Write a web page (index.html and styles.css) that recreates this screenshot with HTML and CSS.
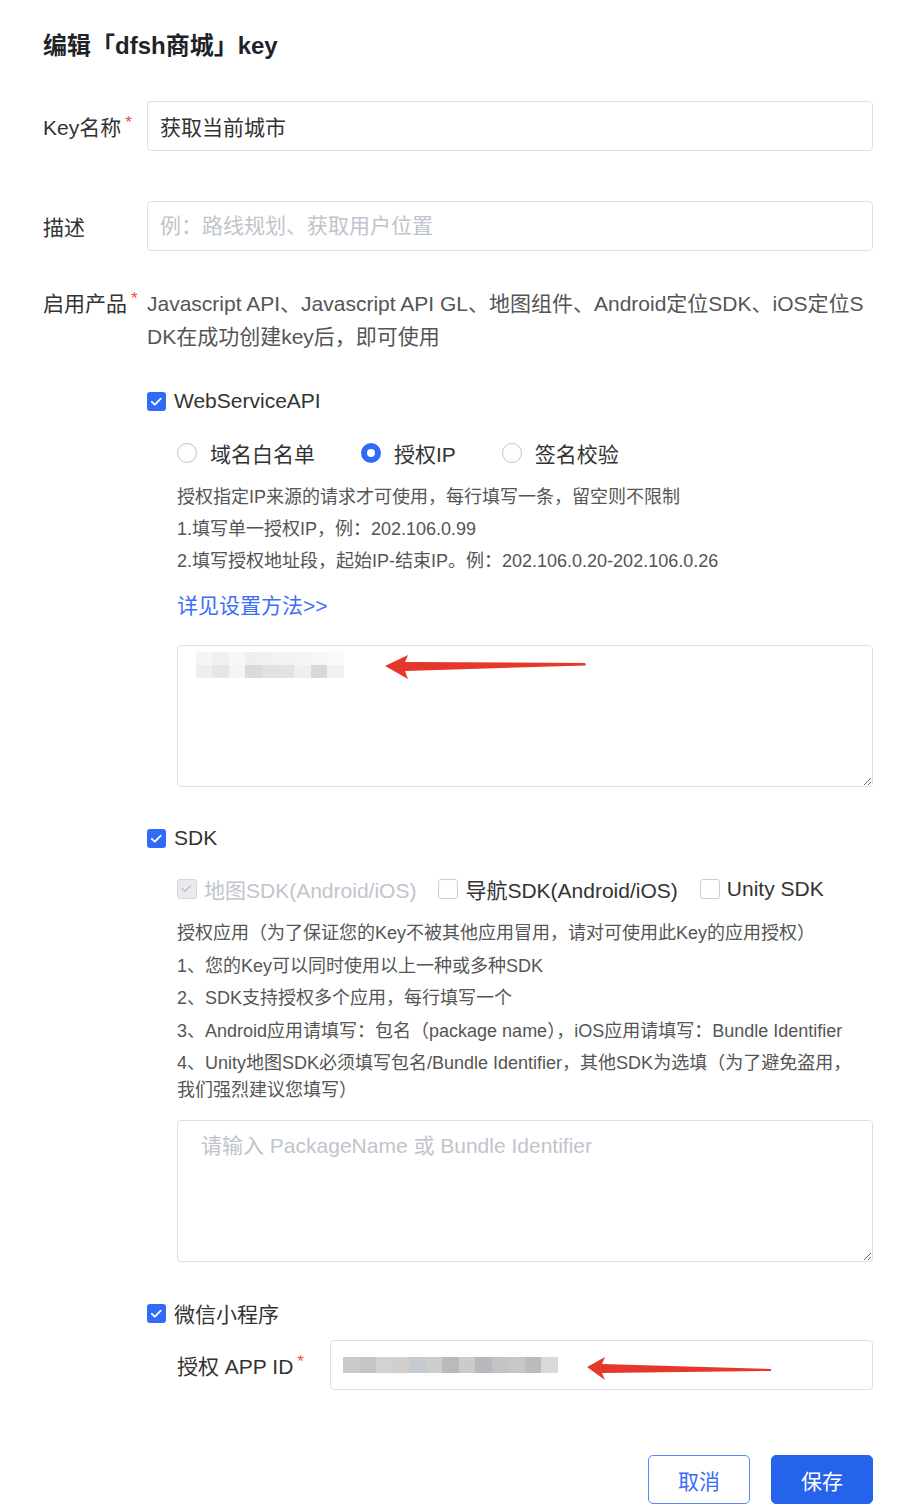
FILE: index.html
```html
<!DOCTYPE html>
<html lang="zh-CN">
<head>
<meta charset="utf-8">
<title>编辑 key</title>
<link rel="stylesheet" href="styles.css">
</head>
<body>
<div class="page">
  <h1 class="title">编辑「dfsh商城」key</h1>

  <div class="row row-first">
    <label class="label">Key名称<span class="star">*</span></label>
    <input class="input" type="text" value="获取当前城市">
  </div>

  <div class="row row-gap">
    <label class="label">描述</label>
    <input class="input" type="text" placeholder="例：路线规划、获取用户位置">
  </div>

  <div class="row row-top row-products">
    <label class="label label-lh">启用产品<span class="star">*</span></label>
    <p class="products-text">Javascript API、Javascript API GL、地图组件、Android定位SDK、iOS定位SDK在成功创建key后，即可使用</p>
  </div>

  <div class="products">
    <div class="check-row ws-row">
      <span class="cb on"><svg viewBox="0 0 19 19"><path d="M4.8 9.8l3 2.9 6-6" fill="none" stroke="#fff" stroke-width="1.8" stroke-linecap="round" stroke-linejoin="round"/></svg></span>
      <span>WebServiceAPI</span>
    </div>

    <div class="sub">
      <div class="radio-group">
        <div class="radio-item"><span class="radio"></span><span>域名白名单</span></div>
        <div class="radio-item"><span class="radio on"></span><span>授权IP</span></div>
        <div class="radio-item"><span class="radio"></span><span>签名校验</span></div>
      </div>

      <div class="help help-ip">
        <p>授权指定IP来源的请求才可使用，每行填写一条，留空则不限制</p>
        <p>1.填写单一授权IP，例：202.106.0.99</p>
        <p>2.填写授权地址段，起始IP-结束IP。例：202.106.0.20-202.106.0.26</p>
      </div>
      <a class="link" href="#">详见设置方法&gt;&gt;</a>

      <div class="area-wrap area-ip">
        <textarea class="area"></textarea>
        <div class="mosaic mosaic-ip">
          <div class="mrow">
            <i style="background:#f5f5f5"></i><i style="background:#f0f0f0"></i><i style="background:#f7f7f7"></i><i style="background:#eeeff0"></i><i style="background:#f1f1f1"></i><i style="background:#f3f3f3"></i><i style="background:#f5f5f5"></i><i style="background:#f6f6f6"></i><i style="background:#fafafa"></i>
          </div>
          <div class="mrow">
            <i style="background:#eeeeee"></i><i style="background:#e6e6e4"></i><i style="background:#f3f4f4"></i><i style="background:#d9dadb"></i><i style="background:#e0e1e1"></i><i style="background:#e2e3e3"></i><i style="background:#efefef"></i><i style="background:#d7d8da"></i><i style="background:#f0f1f2"></i>
          </div>
        </div>
        <svg class="arrow arrow-ip" viewBox="0 0 210 34"><polygon points="4,16 27,5 24,12 204,13 205,15.5 24,21 27,29" fill="#e5372a"/></svg>
      </div>
    </div>

    <div class="check-row sdk-row">
      <span class="cb on"><svg viewBox="0 0 19 19"><path d="M4.8 9.8l3 2.9 6-6" fill="none" stroke="#fff" stroke-width="1.8" stroke-linecap="round" stroke-linejoin="round"/></svg></span>
      <span>SDK</span>
    </div>

    <div class="sub">
      <div class="sdk-opts">
        <div class="opt disabled"><span class="cb2 dis"><svg viewBox="0 0 20 20"><path d="M5 10.3l3.2 3 6.5-6.4" fill="none" stroke="#b8bcc2" stroke-width="1.6" stroke-linecap="round" stroke-linejoin="round"/></svg></span><span>地图SDK(Android/iOS)</span></div>
        <div class="opt"><span class="cb2"></span><span>导航SDK(Android/iOS)</span></div>
        <div class="opt"><span class="cb2"></span><span>Unity SDK</span></div>
      </div>

      <div class="help help-sdk">
        <p>授权应用（为了保证您的Key不被其他应用冒用，请对可使用此Key的应用授权）</p>
        <p>1、您的Key可以同时使用以上一种或多种SDK</p>
        <p>2、SDK支持授权多个应用，每行填写一个</p>
        <p>3、Android应用请填写：包名（package name），iOS应用请填写：Bundle Identifier</p>
        <p>4、Unity地图SDK必须填写包名/Bundle Identifier，其他SDK为选填（为了避免盗用，我们强烈建议您填写）</p>
      </div>

      <div class="area-wrap area-sdk">
        <textarea class="area area-ph" placeholder="请输入 PackageName 或 Bundle Identifier"></textarea>
      </div>
    </div>

    <div class="check-row wx-row">
      <span class="cb on"><svg viewBox="0 0 19 19"><path d="M4.8 9.8l3 2.9 6-6" fill="none" stroke="#fff" stroke-width="1.8" stroke-linecap="round" stroke-linejoin="round"/></svg></span>
      <span>微信小程序</span>
    </div>

    <div class="sub">
      <div class="row appid-row">
        <label class="label-appid">授权 APP ID<span class="star">*</span></label>
        <div class="input-wrap">
          <input class="input input-full" type="text" value="">
          <div class="mosaic mosaic-app">
            <div class="mrow">
              <i style="background:#c9c9c9"></i><i style="background:#c5c5c5"></i><i style="background:#d3d3d3"></i><i style="background:#d0cfcd"></i><i style="background:#c5c9d0"></i><i style="background:#cdcdcb"></i><i style="background:#bcb9ba"></i><i style="background:#cbcbcb"></i><i style="background:#b9b9bd"></i><i style="background:#c3c3c3"></i><i style="background:#c7c7c7"></i><i style="background:#bbbbbc"></i><i style="background:#d9d9d9"></i>
            </div>
          </div>
          <svg class="arrow arrow-app" viewBox="0 0 190 30"><polygon points="3,13 21,3 18,10 187,15 187,17 18,19 21,26" fill="#e5372a"/></svg>
        </div>
      </div>
    </div>
  </div>

  <div class="actions">
    <button class="btn btn-ghost" type="button">取消</button>
    <button class="btn btn-primary" type="button">保存</button>
  </div>
</div>
</body>
</html>
```
FILE: styles.css
```css
* { box-sizing: border-box; }

body {
  margin: 0;
  background: #fff;
  font-family: "Liberation Sans", Arial, "Noto Sans CJK SC", sans-serif;
  color: #333;
}

.page {
  padding: 31px 45px 0 43px;
}

.title {
  margin: 0;
  font-size: 24px;
  font-weight: bold;
  line-height: 30px;
  color: #1f2329;
}

.row {
  display: flex;
  align-items: center;
}

.row-top { align-items: flex-start; }

.row-first { margin-top: 40px; }
.row-gap { margin-top: 50px; }
.row-products { margin-top: 36px; }

.label {
  width: 104px;
  flex: none;
  font-size: 21px;
  color: #333;
  position: relative;
}

.label-lh { line-height: 33px; }

.star {
  color: #f54a45;
  font-size: 17px;
  margin-left: 4px;
  vertical-align: 7px;
  line-height: 0;
}

.input {
  flex: 1;
  min-width: 0;
  height: 50px;
  border: 1px solid #dcdfe6;
  border-radius: 4px;
  padding: 0 12px;
  font-family: inherit;
  font-size: 21px;
  color: #333;
  background: #fff;
  outline: none;
}

.input::placeholder { color: #c0c4cc; }

.products-text {
  margin: 0;
  flex: 1;
  font-size: 21px;
  line-height: 33px;
  color: #555;
  word-break: break-all;
}

.products {
  padding-left: 104px;
}

.check-row {
  display: flex;
  align-items: center;
  gap: 8px;
  height: 24px;
  font-size: 21px;
  color: #333;
}

.ws-row { margin-top: 36px; }
.sdk-row { margin-top: 39px; }
.wx-row { margin-top: 39px; }

.cb {
  width: 19px;
  height: 19px;
  flex: none;
  border-radius: 3px;
  background: #2f6bf7;
  display: block;
}

.cb svg { display: block; width: 19px; height: 19px; }

.sub { padding-left: 30px; }

.radio-group {
  display: flex;
  gap: 46px;
  margin-top: 28px;
  height: 24px;
  align-items: center;
}

.radio-item {
  display: flex;
  align-items: center;
  gap: 13px;
  font-size: 21px;
  color: #333;
}

.radio {
  width: 20px;
  height: 20px;
  border-radius: 50%;
  border: 1.5px solid #bfc4cc;
  background: #fff;
  flex: none;
}

.radio.on {
  border: 6px solid #2f6bf7;
}

.help p { margin: 0; }

.help-ip {
  margin-top: 16px;
  font-size: 18px;
  line-height: 32px;
  color: #555;
}

.link {
  display: block;
  margin-top: 13px;
  font-size: 21px;
  line-height: 32px;
  color: #3b6ef5;
  text-decoration: none;
}

.area-wrap {
  position: relative;
}

.area-ip { margin-top: 23px; }

.area {
  display: block;
  width: 100%;
  height: 142px;
  border: 1px solid #dcdfe6;
  border-radius: 4px;
  padding: 12px 23px;
  font-family: inherit;
  font-size: 21px;
  line-height: 26px;
  color: #333;
  background: #fff;
  outline: none;
}

.area::placeholder { color: #c0c4cc; }

.mosaic {
  position: absolute;
  display: flex;
  flex-direction: column;
}

.mrow { display: flex; }

.mosaic-ip { left: 19px; top: 7px; }
.mosaic-ip .mrow i { display: block; width: 16.4px; height: 13px; }

.arrow { position: absolute; }
.arrow-ip { left: 204px; top: 5px; width: 210px; height: 34px; }

.sdk-opts {
  display: flex;
  gap: 22px;
  margin-top: 27px;
  height: 24px;
  align-items: center;
}

.opt {
  display: flex;
  align-items: center;
  gap: 7px;
  font-size: 21px;
  color: #333;
}

.opt.disabled { color: #c0c4cc; }

.cb2 {
  width: 20px;
  height: 20px;
  flex: none;
  border: 1.5px solid #c9cdd4;
  border-radius: 3px;
  background: #fff;
  display: block;
}

.cb2.dis {
  background: #e9eaec;
  border-color: #d3d6da;
}

.cb2 svg { display: block; width: 17px; height: 17px; }

.help-sdk {
  margin-top: 19px;
  padding-right: 12px;
  font-size: 18px;
  line-height: 27px;
  color: #555;
}

.help-sdk p { margin-bottom: 5.5px; }

.area-sdk { margin-top: 16px; }

.appid-row { margin-top: 15px; }

.label-appid {
  width: 153px;
  flex: none;
  font-size: 21px;
  color: #333;
}

.input-wrap {
  flex: 1;
  position: relative;
  display: flex;
}

.input-full { width: 100%; }

.mosaic-app { left: 13px; top: 17px; }
.mosaic-app .mrow i { display: block; width: 16.5px; height: 16px; }

.arrow-app { left: 254px; top: 14px; width: 190px; height: 30px; }

.actions {
  display: flex;
  justify-content: flex-end;
  gap: 21px;
  margin-top: 65px;
}

.btn {
  width: 102px;
  height: 49px;
  border-radius: 5px;
  font-family: inherit;
  font-size: 21px;
  cursor: pointer;
}

.btn-ghost {
  background: #fff;
  border: 1.5px solid #5b86f7;
  color: #3a6cf4;
}

.btn-primary {
  background: #2563eb;
  border: 1px solid #2563eb;
  color: #fff;
}
```
